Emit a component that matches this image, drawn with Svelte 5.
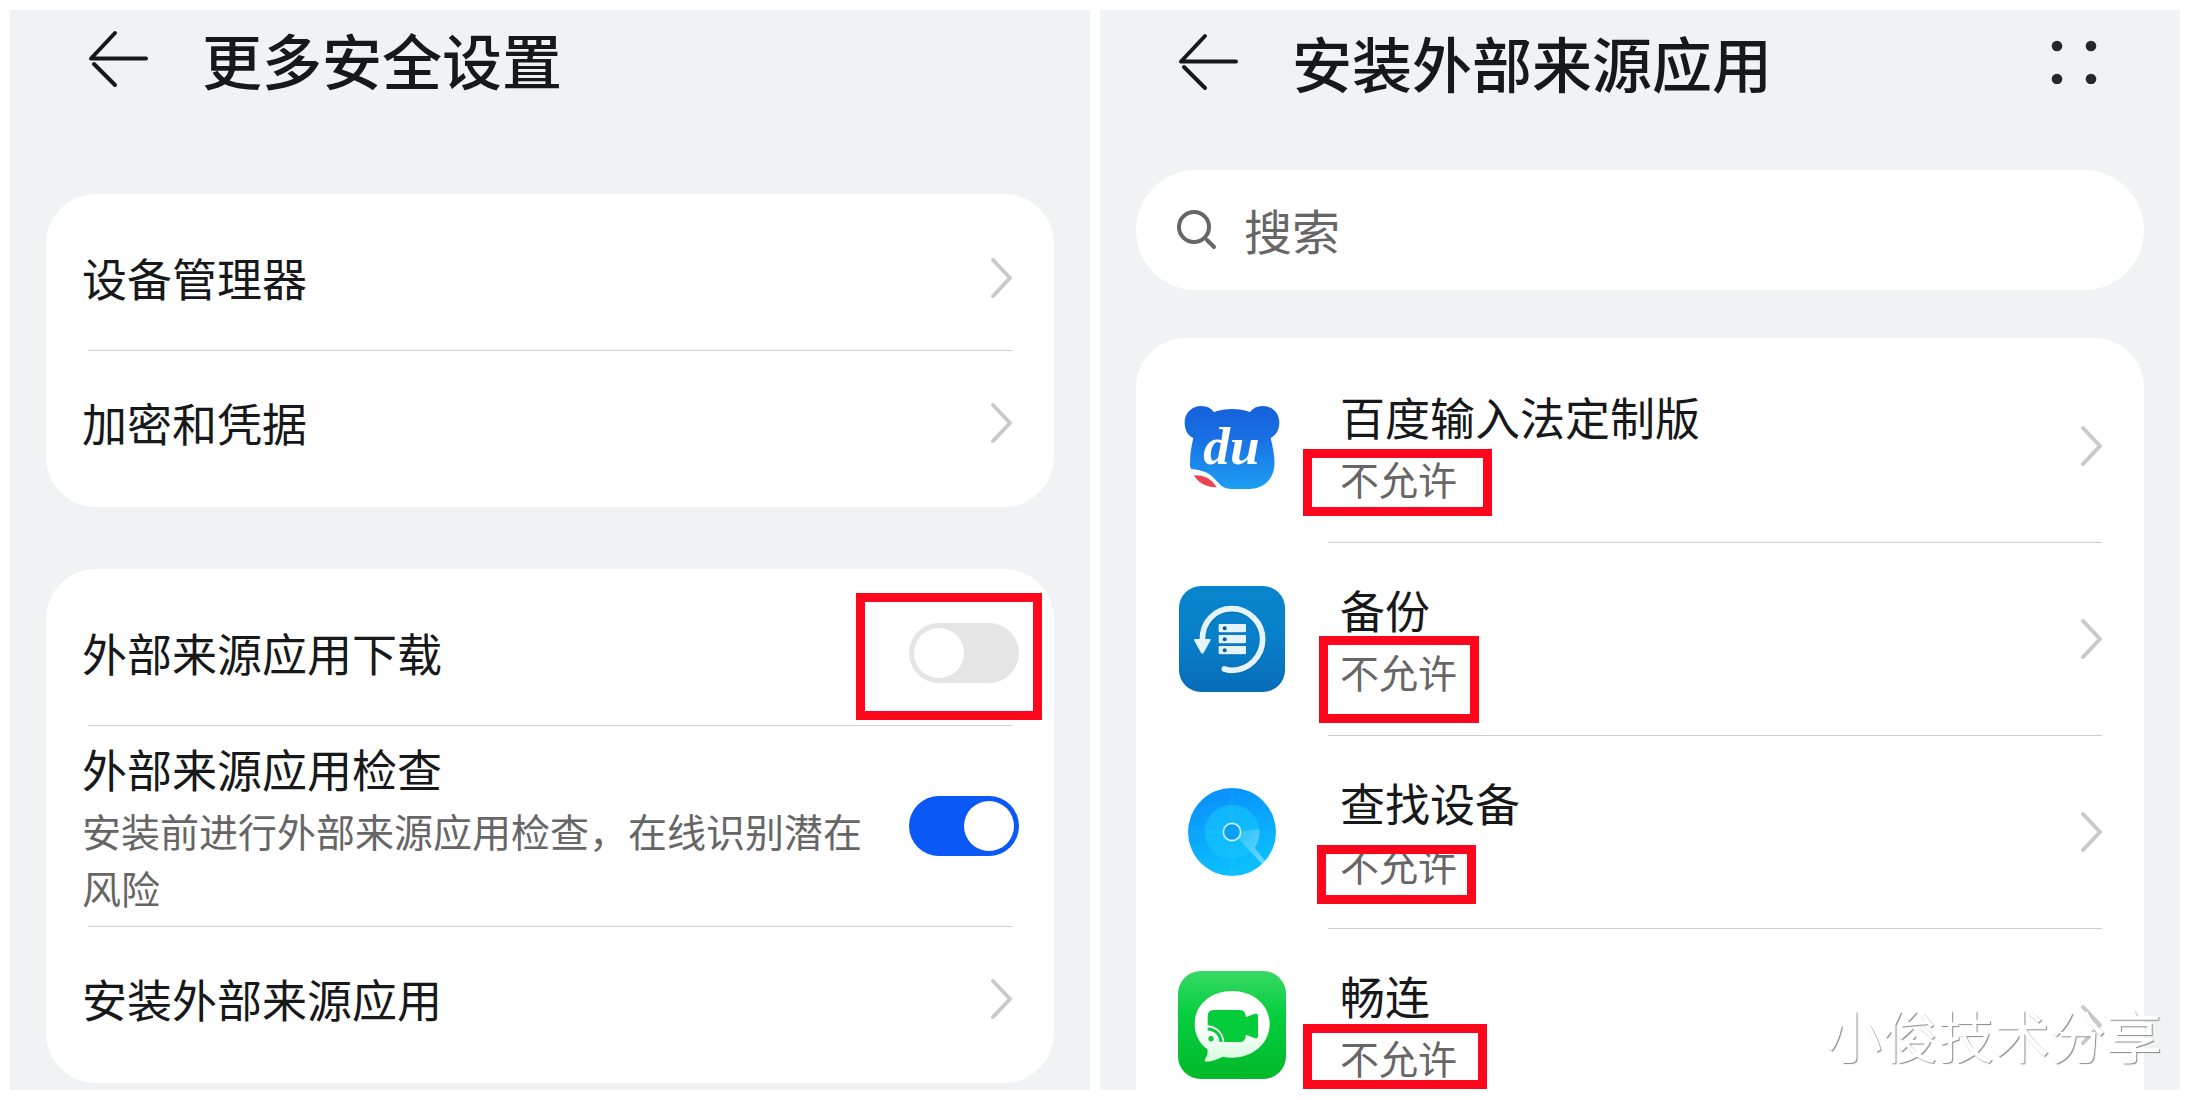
<script lang="ts">
  type IconName = 'ime' | 'backup' | 'find' | 'meetime';
  type Mark = { left: number; top: number; width: number; height: number };
  type SourceApp = { name: string; status: string; icon: IconName; mark: Mark };

  const credentials = ['设备管理器', '加密和凭据'];

  const apps: SourceApp[] = [
    { name: '百度输入法定制版', status: '不允许', icon: 'ime', mark: { left: 167, top: 99, width: 189, height: 67 } },
    { name: '备份', status: '不允许', icon: 'backup', mark: { left: 183, top: 94, width: 160, height: 87 } },
    { name: '查找设备', status: '不允许', icon: 'find', mark: { left: 181, top: 110, width: 159, height: 59 } },
    { name: '畅连', status: '不允许', icon: 'meetime', mark: { left: 167, top: 96, width: 184, height: 65 } },
  ];

  const downloadMark: Mark = { left: -53, top: -30, width: 186, height: 127 };

  let allowDownload = $state(false);
  let checkSources = $state(true);
  let query = $state('');

  const box = (m: Mark) => `left:${m.left}px;top:${m.top}px;width:${m.width}px;height:${m.height}px`;
</script>

{#snippet backButton()}
  <button class="icon-button" type="button" aria-label="返回">
    <svg width="62" height="58" viewBox="0 0 62 58" fill="none" stroke="#17181a" stroke-width="4" stroke-linecap="round" stroke-linejoin="round">
      <path d="M28 3 4 28.500H59M7 34 28 55" />
    </svg>
  </button>
{/snippet}

{#snippet chevron()}
  <svg class="chevron" width="36" height="44" viewBox="0 0 36 44" fill="none" stroke="#c9c9c9" stroke-width="4" stroke-linecap="round" stroke-linejoin="round" aria-hidden="true">
    <path d="M10 4 27 22 10 40" />
  </svg>
{/snippet}

{#snippet appIcon(name: IconName)}
  <svg class="app-icon" viewBox="0 0 324 324" aria-hidden="true">
    {#if name === 'ime'}
      <defs>
        <linearGradient id="ime-fill" x1="0" y1="0" x2="0" y2="1">
          <stop offset="0" stop-color="#1560da" />
          <stop offset=".4" stop-color="#1a70e4" />
          <stop offset="1" stop-color="#1c9ff2" />
        </linearGradient>
      </defs>
      <path fill="url(#ime-fill)" d="M70 42c17 0 29 6 38 18 34-12 76-12 108 0 9-12 21-18 38-18 28 0 50 21 50 49 0 26-12 41-26 47 6 25 13 54 11 82-2 43-34 71-79 71h-50c-22 0-33-11-44-24-16-17-30-31-55-30-22-2-25-9-25-19 0-31 4-55 10-80-16-6-26-22-26-47 0-28 22-49 50-49Z" />
      <path fill="#fff" d="M36 232c30 0 45 7 62 25 13 15 23 30 45 34H90L44 258Z" />
      <path fill="#ef4351" d="M48 250c25-1 51 7 68 36-27 1-55-11-68-36Z" />
      <text x="76" y="215" fill="#fff" font-size="160" font-weight="700" font-style="italic" font-family="Liberation Serif, serif">du</text>
    {:else if name === 'backup'}
      <defs>
        <linearGradient id="backup-fill" x1="0" y1="0" x2="0" y2="1">
          <stop offset="0" stop-color="#0785cc" />
          <stop offset=".5" stop-color="#087fc9" />
          <stop offset="1" stop-color="#066cb8" />
        </linearGradient>
      </defs>
      <rect x="3" y="3" width="318" height="318" rx="66" fill="url(#backup-fill)" />
      <g fill="none" stroke-width="17" stroke-linecap="round">
        <path stroke="#0561a4" opacity=".45" d="M73 170C72 114 112 75 161 75c50 0 93 41 93 92s-42 93-93 93c-9 0-15-2-22-4" />
        <path stroke="#e4f3fc" d="M73 166C72 110 112 71 161 71c50 0 93 41 93 92s-42 93-93 93c-9 0-15-2-22-4" />
      </g>
      <path fill="#e4f3fc" d="M51 162h44q5 0 2 5l-20 36q-4 5-8 0l-20-36q-3-5 2-5Z" />
      {#each [117, 150, 183] as y}
        <rect x="122" y={y + 3} width="82" height="25" rx="3" fill="#0561a4" opacity=".5" />
        <rect x="122" y={y} width="82" height="25" rx="3" fill="#e4f3fc" />
        <circle cx="140" cy={y + 13} r="6" fill="#0b5f9e" />
      {/each}
    {:else if name === 'find'}
      <defs>
        <linearGradient id="find-fill" x1=".3" y1="0" x2=".6" y2="1">
          <stop offset="0" stop-color="#098ffb" />
          <stop offset="1" stop-color="#0bc3fd" />
        </linearGradient>
        <linearGradient id="find-beam" x1="0" y1="0" x2="1" y2="1">
          <stop offset="0" stop-color="#fff" stop-opacity=".05" />
          <stop offset="1" stop-color="#fff" stop-opacity=".42" />
        </linearGradient>
      </defs>
      <circle cx="162" cy="162" r="132" fill="url(#find-fill)" />
      <circle cx="162" cy="162" r="82" fill="#15c6fb" opacity=".6" />
      <path d="M162 30V294M30 162H294" stroke="#fff" stroke-width="2" opacity=".12" />
      <path fill="url(#find-beam)" d="M162 162 244 153a82 82 0 0 1-14 56l31 39-9 9Z" />
      <circle cx="162" cy="162" r="26" fill="#0b9ff7" stroke="#c6f3ff" stroke-width="5" />
    {:else}
      <defs>
        <linearGradient id="meet-fill" x1="0" y1="0" x2="0" y2="1">
          <stop offset="0" stop-color="#38d863" />
          <stop offset=".4" stop-color="#05cf40" />
          <stop offset="1" stop-color="#02b828" />
        </linearGradient>
        <linearGradient id="meet-bubble" x1="0" y1="0" x2="0" y2="1">
          <stop offset=".5" stop-color="#fff" />
          <stop offset="1" stop-color="#d5fadd" />
        </linearGradient>
      </defs>
      <rect width="324" height="324" rx="68" fill="url(#meet-fill)" />
      <path fill="url(#meet-bubble)" d="M162 60c64 0 113 42 113 99s-49 101-113 101c-10 0-19-1-28-3-16 10-33 13-49 15-5 0-6-3-4-7 7-10 9-21 7-30-23-17-38-44-38-76 0-57 48-99 112-99Z" />
      <path fill="#04cc3b" d="M107 117h79q16 0 18 21l25-9q11-4 11 6v61q0 9-11 5l-25-10q-2 22-18 22h-47c-1-27-24-49-50-50v-27q0-19 18-19Z" />
      <g fill="none" stroke="#04cc3b" stroke-width="9">
        <path d="M89 174c23 1 39 17 40 39" />
        <circle cx="99" cy="203" r="5" fill="#04cc3b" stroke-width="6" />
      </g>
    {/if}
  </svg>
{/snippet}

<main>
  <section class="screen" aria-labelledby="security-title">
    <header>
      {@render backButton()}
      <h1 id="security-title">更多安全设置</h1>
    </header>

    <ul class="card">
      {#each credentials as label}
        <li>
          <button class="row" type="button">
            <span class="title">{label}</span>
            {@render chevron()}
          </button>
        </li>
      {/each}
    </ul>

    <ul class="card">
      <li>
        <label class="row">
          <span class="title">外部来源应用下载</span>
          <span class="switch">
            <input type="checkbox" role="switch" bind:checked={allowDownload} />
            <span class="mark" style={box(downloadMark)}></span>
          </span>
        </label>
      </li>
      <li>
        <label class="row tall">
          <span class="copy">
            <span class="title">外部来源应用检查</span>
            <span class="note">安装前进行外部来源应用检查，在线识别潜在风险</span>
          </span>
          <span class="switch">
            <input type="checkbox" role="switch" bind:checked={checkSources} />
          </span>
        </label>
      </li>
      <li>
        <button class="row" type="button">
          <span class="title">安装外部来源应用</span>
          {@render chevron()}
        </button>
      </li>
    </ul>
  </section>

  <section class="screen sources" aria-labelledby="sources-title">
    <header>
      {@render backButton()}
      <h1 id="sources-title">安装外部来源应用</h1>
      <button class="icon-button" type="button" aria-label="更多">
        <svg width="46" height="44" viewBox="0 0 46 44" fill="#26282a">
          <circle cx="6" cy="6" r="5.300" />
          <circle cx="40" cy="6" r="5.300" />
          <circle cx="6" cy="39" r="5.300" />
          <circle cx="40" cy="39" r="5.300" />
        </svg>
      </button>
    </header>

    <label class="search">
      <svg width="42" height="42" viewBox="0 0 42 42" fill="none" stroke="#666" stroke-width="4" stroke-linecap="round" aria-hidden="true">
        <circle cx="18" cy="18" r="15" />
        <path d="m31 31 7 7" />
      </svg>
      <input type="search" placeholder="搜索" aria-label="搜索" bind:value={query} />
    </label>

    <ul class="card apps">
      {#each apps as app}
        <li>
          <button class="row" type="button">
            {@render appIcon(app.icon)}
            <span class="copy">
              <span class="title">{app.name}</span>
              <span class="note">{app.status}</span>
            </span>
            {@render chevron()}
          </button>
          <span class="mark" style={box(app.mark)}></span>
        </li>
      {/each}
    </ul>
  </section>

  <p class="watermark">小俊技术分享</p>
</main>

<style>
  :global(body) { margin: 0; background: #fff; }

  main {
    position: relative;
    box-sizing: border-box;
    display: grid;
    grid-template-columns: 1fr 1fr;
    gap: 10px;
    height: 100vh;
    padding: 10px;
    overflow: hidden;
    color: #17181a;
    font-family: "Noto Sans CJK SC", sans-serif;
  }

  .screen {
    min-width: 0;
    min-height: 0;
    padding: 0 36px;
    background: #f0f2f4;
    overflow: hidden;
  }

  header { display: flex; align-items: center; height: 98px; margin-bottom: 86px; padding: 0 47px 0 41px; }
  .sources header { height: 104px; margin-bottom: 56px; }
  h1 { flex: 1; margin: 0 0 0 53px; font-size: 60px; font-weight: 500; line-height: 88px; }

  button { border: 0; background: none; color: inherit; font: inherit; cursor: pointer; }
  .icon-button { display: flex; padding: 0; }

  .card { margin: 0 0 62px; padding: 12px 0; border-radius: 50px; background: #fff; list-style: none; }
  .card li { position: relative; }
  .card li + li::before { content: ""; display: block; height: 1px; margin: 0 42px; background: #cfcfcf; }

  .row {
    box-sizing: border-box;
    display: flex;
    align-items: center;
    justify-content: space-between;
    width: 100%;
    height: 144px;
    padding: 0 35px 1px 36px;
    text-align: left;
    cursor: pointer;
  }
  .row.tall { height: 200px; }
  .copy { display: flex; flex-direction: column; flex: 1; }
  .title { font-size: 45px; line-height: 66px; }
  .note { max-width: 800px; color: #666; font-size: 39px; line-height: 57px; }
  .chevron { flex: none; }

  .switch { position: relative; flex: none; display: flex; }
  .switch input {
    appearance: none;
    display: flex;
    align-items: center;
    box-sizing: border-box;
    width: 110px;
    height: 60px;
    margin: 0;
    padding: 5px;
    border-radius: 30px;
    background: #e5e5e5;
    cursor: pointer;
  }
  .switch input::before { content: ""; width: 50px; height: 50px; border-radius: 50%; background: #fff; }
  .switch input:checked { justify-content: flex-end; background: #0a59f7; }

  .search {
    display: flex;
    align-items: center;
    gap: 26px;
    height: 120px;
    margin-bottom: 48px;
    padding: 0 40px;
    border-radius: 60px;
    background: #fff;
  }
  .search input { flex: 1; min-width: 0; border: 0; padding: 0 0 2px; outline: 0; background: none; color: inherit; font: 48px/70px "Noto Sans CJK SC", sans-serif; }
  .search input::placeholder { color: #666; opacity: 1; }

  .apps .row { height: 192px; padding-left: 42px; }
  .apps li + li::before { margin-left: 192px; }
  .app-icon { flex: none; width: 108px; height: 108px; margin-right: 54px; }

  .mark { position: absolute; box-sizing: border-box; border: 9px solid #ff061d; pointer-events: none; }

  .watermark {
    position: absolute;
    right: 28px;
    bottom: 26px;
    margin: 0;
    color: #fff;
    font-size: 56px;
    line-height: 80px;
    text-shadow: 1px 1px 1px #888;
    pointer-events: none;
  }
</style>
